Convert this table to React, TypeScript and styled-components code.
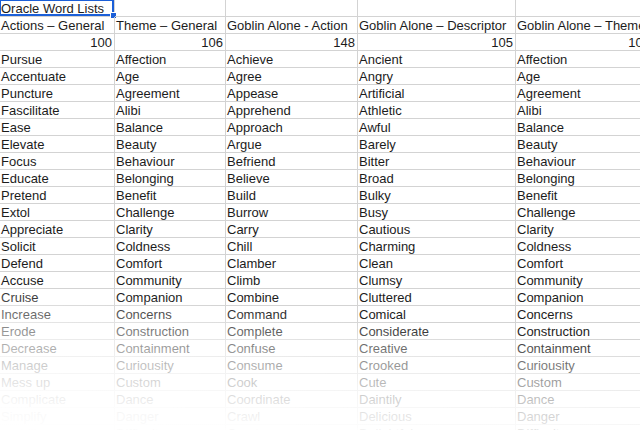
import React from "react";
import styled, { createGlobalStyle } from "styled-components";

const Global = createGlobalStyle`
  html, body { margin: 0; padding: 0; background: #fff; overflow: hidden; }
  body { font-family: "Liberation Sans", Arial, sans-serif; }
`;

const Page = styled.div`
  position: relative;
  width: 640px;
  height: 430px;
  overflow: hidden;
  background: #fff;
`;

const Sheet = styled.div`
  display: grid;
  grid-template-columns: 115px 111px 132px 158px 137px;
  grid-auto-rows: 17px;
  width: 653px;
`;

const Cell = styled.div<{ $align?: "left" | "right" }>`
  position: relative;
  box-sizing: border-box;
  border-right: 1px solid #d3d3d3;
  border-bottom: 1px solid #d3d3d3;
  font-family: "Liberation Sans", Arial, sans-serif;
  font-size: 13px;
  line-height: 15px;
  padding: 1px 2px 0 1px;
  color: #1c1c1c;
  white-space: nowrap;
  overflow: visible;
  text-align: ${(p) => (p.$align === "right" ? "right" : "left")};
`;

const Selection = styled.div`
  position: absolute;
  left: -1px;
  top: -1px;
  width: 115px;
  height: 17px;
  box-sizing: border-box;
  border: 2px solid #1b5fd8;
  pointer-events: none;
`;

const Handle = styled.div`
  position: absolute;
  left: 110px;
  top: 12px;
  width: 5px;
  height: 5px;
  background: #1b5fd8;
  border: 1px solid #fff;
  box-sizing: content-box;
`;

const Fade = styled.div`
  position: absolute;
  inset: 0;
  pointer-events: none;
  background: linear-gradient(
    185deg,
    rgba(255, 255, 255, 0) 70%,
    rgba(255, 255, 255, 0.3) 75%,
    rgba(255, 255, 255, 0.55) 80%,
    rgba(255, 255, 255, 0.75) 85%,
    rgba(255, 255, 255, 0.88) 90%,
    rgba(255, 255, 255, 0.96) 94%,
    #fff 100%
  );
`;

const headers = [
  "Actions – General",
  "Theme – General",
  "Goblin Alone - Action",
  "Goblin Alone – Descriptor",
  "Goblin Alone – Theme",
];
const counts = ["100", "106", "148", "105", "106"];

const col1 = [
  "Pursue", "Accentuate", "Puncture", "Fascilitate", "Ease", "Elevate", "Focus",
  "Educate", "Pretend", "Extol", "Appreciate", "Solicit", "Defend", "Accuse",
  "Cruise", "Increase", "Erode", "Decrease", "Manage", "Mess up", "Complicate",
  "Simplify", "Stabilize",
];
const themes = [
  "Affection", "Age", "Agreement", "Alibi", "Balance", "Beauty", "Behaviour",
  "Belonging", "Benefit", "Challenge", "Clarity", "Coldness", "Comfort",
  "Community", "Companion", "Concerns", "Construction", "Containment",
  "Curiousity", "Custom", "Dance", "Danger", "Difficulty",
];
const col3 = [
  "Achieve", "Agree", "Appease", "Apprehend", "Approach", "Argue", "Befriend",
  "Believe", "Build", "Burrow", "Carry", "Chill", "Clamber", "Climb", "Combine",
  "Command", "Complete", "Confuse", "Consume", "Cook", "Coordinate", "Crawl",
  "Create",
];
const col4 = [
  "Ancient", "Angry", "Artificial", "Athletic", "Awful", "Barely", "Bitter",
  "Broad", "Bulky", "Busy", "Cautious", "Charming", "Clean", "Clumsy",
  "Cluttered", "Comical", "Considerate", "Creative", "Crooked", "Cute",
  "Daintily", "Delicious", "Delightful",
];

export default function App() {
  const rows = col1.map((_, i) => [col1[i], themes[i], col3[i], col4[i], themes[i]]);
  return (
    <Page>
      <Global />
      <Sheet>
        <Cell>
          Oracle Word Lists
          <Selection />
          <Handle />
        </Cell>
        <Cell />
        <Cell />
        <Cell />
        <Cell />
        {headers.map((h) => (
          <Cell key={h}>{h}</Cell>
        ))}
        {counts.map((c, i) => (
          <Cell key={"n" + i} $align="right">
            {c}
          </Cell>
        ))}
        {rows.map((r, ri) =>
          r.map((w, ci) => <Cell key={ri + "-" + ci}>{w}</Cell>)
        )}
      </Sheet>
      <Fade />
    </Page>
  );
}
